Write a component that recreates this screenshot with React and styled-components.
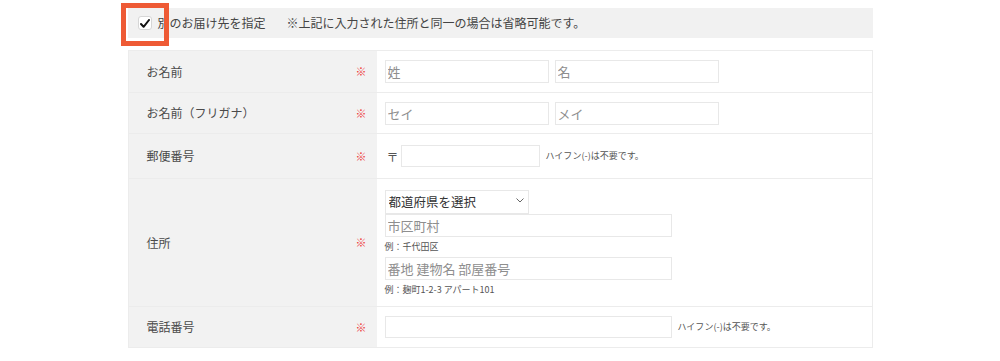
import React from "react";
import styled, { createGlobalStyle } from "styled-components";

const Global = createGlobalStyle`
  html, body { margin: 0; padding: 0; background: #fff; }
  body { font-family: "Noto Sans CJK JP", "Noto Sans", sans-serif; color: #444; }
  * { box-sizing: border-box; }
`;

const Page = styled.div`
  width: 745px;
  margin: 0 auto;
  padding-top: 8px;
  position: relative;
`;

const Bar = styled.div`
  height: 30px;
  background: #f1f1f1;
  display: flex;
  align-items: center;
  padding-left: 10px;
  font-size: 12px;
  line-height: 1;
  color: #444;
`;

const CheckBox = styled.span`
  width: 14px;
  height: 14px;
  border: 1px solid #d6d6d6;
  border-radius: 3px;
  background: #fff;
  display: inline-flex;
  align-items: center;
  justify-content: center;
  margin-right: 6px;
`;

const BarLabel = styled.span`
  margin-right: 21px;
`;

const Highlight = styled.div`
  position: absolute;
  left: -7px;
  top: 3px;
  width: 48px;
  height: 43px;
  border: 5px solid #ee5a35;
  pointer-events: none;
`;

const Table = styled.div`
  margin-top: 12px;
  border: 1px solid #ececec;
  border-bottom: none;
`;

const Row = styled.div`
  display: grid;
  grid-template-columns: 248px 1fr;
  min-height: ${(p) => p.$h}px;
  border-bottom: 1px solid #ececec;
`;

const LabelCell = styled.div`
  background: #f2f2f2;
  display: flex;
  align-items: center;
  justify-content: space-between;
  padding: 0 10px 0 18px;
  font-size: 12px;
  line-height: 1;
  color: #4a4a4a;
`;

const Req = styled.span`
  color: #ee3b3b;
  font-size: 11px;
`;

const ValueCell = styled.div`
  display: flex;
  align-items: center;
  padding: 0 8px;
  gap: 6px;
`;

const Stack = styled.div`
  display: flex;
  flex-direction: column;
  align-items: flex-start;
  padding: 9px 8px 6px;
`;

const TextInput = styled.input`
  width: ${(p) => p.$w}px;
  height: ${(p) => p.$hh ?? 23}px;
  border: 1px solid #e8e8e8;
  background: #fff;
  padding: 0 2px;
  font-family: "Noto Sans CJK JP", sans-serif;
  font-size: 13px;
  color: #333;
  outline: none;
  margin: 0;
  &::placeholder { color: #8e8e8e; }
`;

const Note = styled.span`
  font-size: 9px;
  line-height: 20px;
  color: #555;
`;

const Postal = styled.span`
  font-size: 12px;
  color: #555;
  margin: 0 -4px 0 2px;
`;

const SelectWrap = styled.div`
  position: relative;
  width: 144px;
  height: 24px;
  margin-bottom: 2px;
`;

const Select = styled.select`
  appearance: none;
  -webkit-appearance: none;
  width: 100%;
  height: 100%;
  border: 1px solid #e8e8e8;
  border-radius: 0;
  background: #fff;
  padding: 0 3px;
  font-family: "Noto Sans CJK JP", sans-serif;
  font-size: 12.5px;
  color: #333;
  outline: none;
`;

const Chevron = styled.svg`
  position: absolute;
  right: 5px;
  top: 10px;
  pointer-events: none;
`;

export default function App() {
  return (
    <>
      <Global />
      <Page>
        <Bar>
          <CheckBox>
            <svg width="10" height="9" viewBox="0 0 10 9">
              <path d="M1 5 L3.6 7.8 L9 1" fill="none" stroke="#111" strokeWidth="2" strokeLinecap="round" strokeLinejoin="round" />
            </svg>
          </CheckBox>
          <BarLabel>別のお届け先を指定</BarLabel>
          <span>※上記に入力された住所と同一の場合は省略可能です。</span>
        </Bar>
        <Highlight />
        <Table>
          <Row $h={42}>
            <LabelCell>お名前<Req>※</Req></LabelCell>
            <ValueCell>
              <TextInput $w={164} placeholder="姓" />
              <TextInput $w={164} placeholder="名" />
            </ValueCell>
          </Row>
          <Row $h={41}>
            <LabelCell>お名前（フリガナ）<Req>※</Req></LabelCell>
            <ValueCell>
              <TextInput $w={164} placeholder="セイ" />
              <TextInput $w={164} placeholder="メイ" />
            </ValueCell>
          </Row>
          <Row $h={45}>
            <LabelCell>郵便番号<Req>※</Req></LabelCell>
            <ValueCell>
              <Postal>〒</Postal>
              <TextInput $w={139} $hh={22} />
              <Note>ハイフン(-)は不要です。</Note>
            </ValueCell>
          </Row>
          <Row $h={128}>
            <LabelCell>住所<Req>※</Req></LabelCell>
            <Stack>
              <SelectWrap>
                <Select defaultValue="">
                  <option value="">都道府県を選択</option>
                </Select>
                <Chevron width="8" height="5" viewBox="0 0 8 5">
                  <path d="M0.5 0.5 L4 4 L7.5 0.5" fill="none" stroke="#666" strokeWidth="1" />
                </Chevron>
              </SelectWrap>
              <TextInput $w={287} placeholder="市区町村" />
              <Note>例：千代田区</Note>
              <TextInput $w={287} placeholder="番地 建物名 部屋番号" />
              <Note>例：麹町1-2-3 アパート101</Note>
            </Stack>
          </Row>
          <Row $h={41}>
            <LabelCell>電話番号<Req>※</Req></LabelCell>
            <ValueCell>
              <TextInput $w={287} $hh={22} />
              <Note>ハイフン(-)は不要です。</Note>
            </ValueCell>
          </Row>
        </Table>
      </Page>
    </>
  );
}
